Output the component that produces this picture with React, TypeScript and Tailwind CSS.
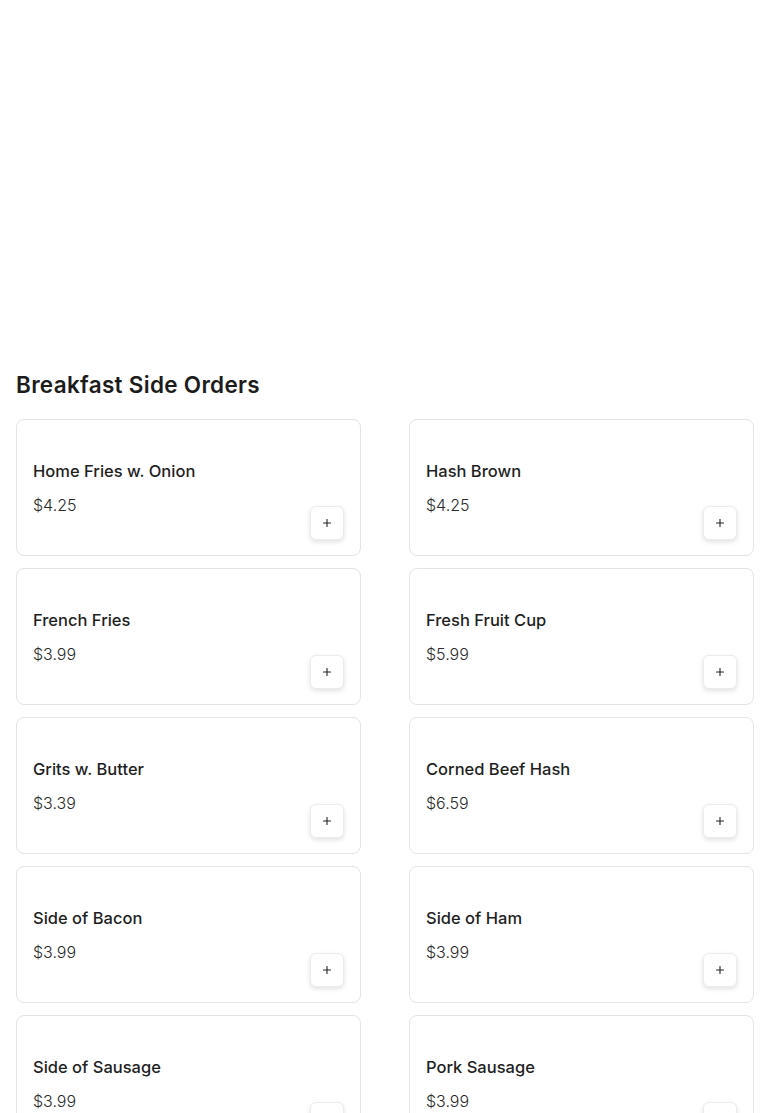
import { Plus } from 'lucide-react';

const items = [
    { name: 'Home Fries w. Onion', price: '$4.25' },
    { name: 'Hash Brown', price: '$4.25' },
    { name: 'French Fries', price: '$3.99' },
    { name: 'Fresh Fruit Cup', price: '$5.99' },
    { name: 'Grits w. Butter', price: '$3.39' },
    { name: 'Corned Beef Hash', price: '$6.59' },
    { name: 'Side of Bacon', price: '$3.99' },
    { name: 'Side of Ham', price: '$3.99' },
    { name: 'Side of Sausage', price: '$3.99' },
    { name: 'Pork Sausage', price: '$3.99' },
];

export default function App() {
    return (
        <div className="min-h-screen bg-white text-[#1a1a1a] font-['Inter',sans-serif]">
            {/* hero area left blank */}
            <div className="h-[371px]" />

            <section className="px-4">
                <h2 className="text-[22.5px] leading-[28px] font-semibold tracking-[0.3px] text-[#1c1c1c]">
                    Breakfast Side Orders
                </h2>

                <div className="grid grid-cols-2 gap-x-12 gap-y-3 mt-5">
                    {items.map((item) => (
                        <div
                            key={item.name}
                            className="flex h-[137px] rounded-lg border border-[#e4e4e4] bg-white p-4"
                        >
                            <div className="flex-1 pt-[24px]">
                                <div className="text-[16.5px] leading-[22px] font-medium text-[#1f1f1f]">{item.name}</div>
                                <div className="mt-[12px] text-[16px] leading-[22px] font-light text-[#2a2a2a]">{item.price}</div>
                            </div>
                            <button className="self-end -mb-px flex items-center justify-center w-[34px] h-[34px] rounded-md bg-white border border-[#ececec] shadow-[0_2px_5px_rgba(0,0,0,0.12)]">
                                <Plus size={12} strokeWidth={2.2} className="text-[#222]" />
                            </button>
                        </div>
                    ))}
                </div>
            </section>
        </div>
    );
}
